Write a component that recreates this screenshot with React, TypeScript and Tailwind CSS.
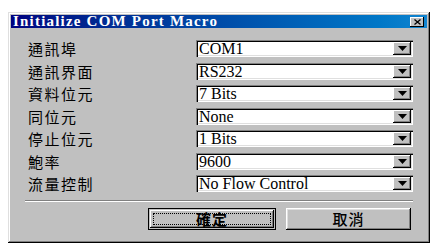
const FIELDS = [
  { label: "通訊埠", value: "COM1" },
  { label: "通訊界面", value: "RS232" },
  { label: "資料位元", value: "7 Bits" },
  { label: "同位元", value: "None" },
  { label: "停止位元", value: "1 Bits" },
  { label: "鮑率", value: "9600" },
  { label: "流量控制", value: "No Flow Control" },
]

const cjk = "font-['Noto_Sans_CJK_TC','Noto_Sans_CJK_SC',sans-serif]"
const serif = "font-['Liberation_Serif',serif]"

function ComboBox({ value }: { value: string }) {
  return (
    <div className="w-[217px] h-[17px] bg-white flex items-stretch shadow-[inset_1px_1px_0_#808080,inset_2px_2px_0_#000,inset_-1px_-1px_0_#fff,inset_-2px_-2px_0_#dfdfdf] p-[2px]">
      <span className={`flex-1 pl-[1px] text-[16px] leading-[13px] text-black ${serif}`}>{value}</span>
      <div className="w-[18px] bg-[#c0c0c0] flex items-center justify-center shadow-[inset_-1px_-1px_0_#000,inset_1px_1px_0_#fff,inset_-2px_-2px_0_#808080]">
        <svg width="9" height="5" viewBox="0 0 9 5">
          <path d="M0 0h9L4.5 5z" fill="#000" />
        </svg>
      </div>
    </div>
  )
}

export default function App() {
  return (
    <div className="w-[433px] h-[252px] bg-white pt-[12px] pl-[8px]">
      <div className="w-[422px] h-[231px] bg-[#c0c0c0] p-[3px] flex flex-col shadow-[inset_-1px_-1px_0_#000,inset_1px_1px_0_#dfdfdf,inset_-2px_-2px_0_#808080,inset_2px_2px_0_#fff]">
        <div className="h-[13px] bg-gradient-to-r from-[#000080] to-[#1084d0] flex items-center justify-between pl-[2px] pr-[3px]">
          <span className={`text-white font-bold text-[15px] leading-[13px] tracking-[1.2px] ${serif}`}>Initialize COM Port Macro</span>
          <div className="w-[14px] h-[10px] bg-[#c0c0c0] flex items-center justify-center shadow-[inset_-1px_-1px_0_#000,inset_1px_1px_0_#fff]">
            <svg width="7" height="6" viewBox="0 0 7 6">
              <path d="M0.5 0.5L6.5 5.5M6.5 0.5L0.5 5.5" stroke="#000" strokeWidth="1.3" />
            </svg>
          </div>
        </div>

        <div className="flex flex-col gap-[5.5px] mt-[12px] pl-[17px]">
          {FIELDS.map((f) => (
            <div key={f.label} className="flex items-center h-[17px]">
              <span className={`w-[168px] text-[15px] leading-[17px] tracking-[1.5px] text-black ${cjk}`}>{f.label}</span>
              <ComboBox value={f.value} />
            </div>
          ))}
        </div>

        <div className="mt-[8px] ml-[14px] w-[388px] border-t border-t-[#808080] border-b border-b-white" />

        <div className="flex gap-[10px] mt-[6px] pl-[137px]">
          <button className="w-[128px] h-[22px] bg-[#c0c0c0] border border-black p-[1px] flex">
            <div className="flex-1 flex shadow-[inset_-1px_-1px_0_#000,inset_1px_1px_0_#fff,inset_-2px_-2px_0_#808080] p-[3px]">
              <div className={`flex-1 border border-dotted border-black flex items-center justify-center text-[15px] leading-[14px] font-bold tracking-[1px] text-black ${cjk}`}>確定</div>
            </div>
          </button>
          <button className={`w-[125px] h-[22px] bg-[#c0c0c0] flex items-center justify-center text-[15px] leading-[14px] font-medium tracking-[1px] text-black shadow-[inset_-1px_-1px_0_#000,inset_1px_1px_0_#fff,inset_-2px_-2px_0_#808080,inset_2px_2px_0_#dfdfdf] ${cjk}`}>取消</button>
        </div>
      </div>
    </div>
  )
}
